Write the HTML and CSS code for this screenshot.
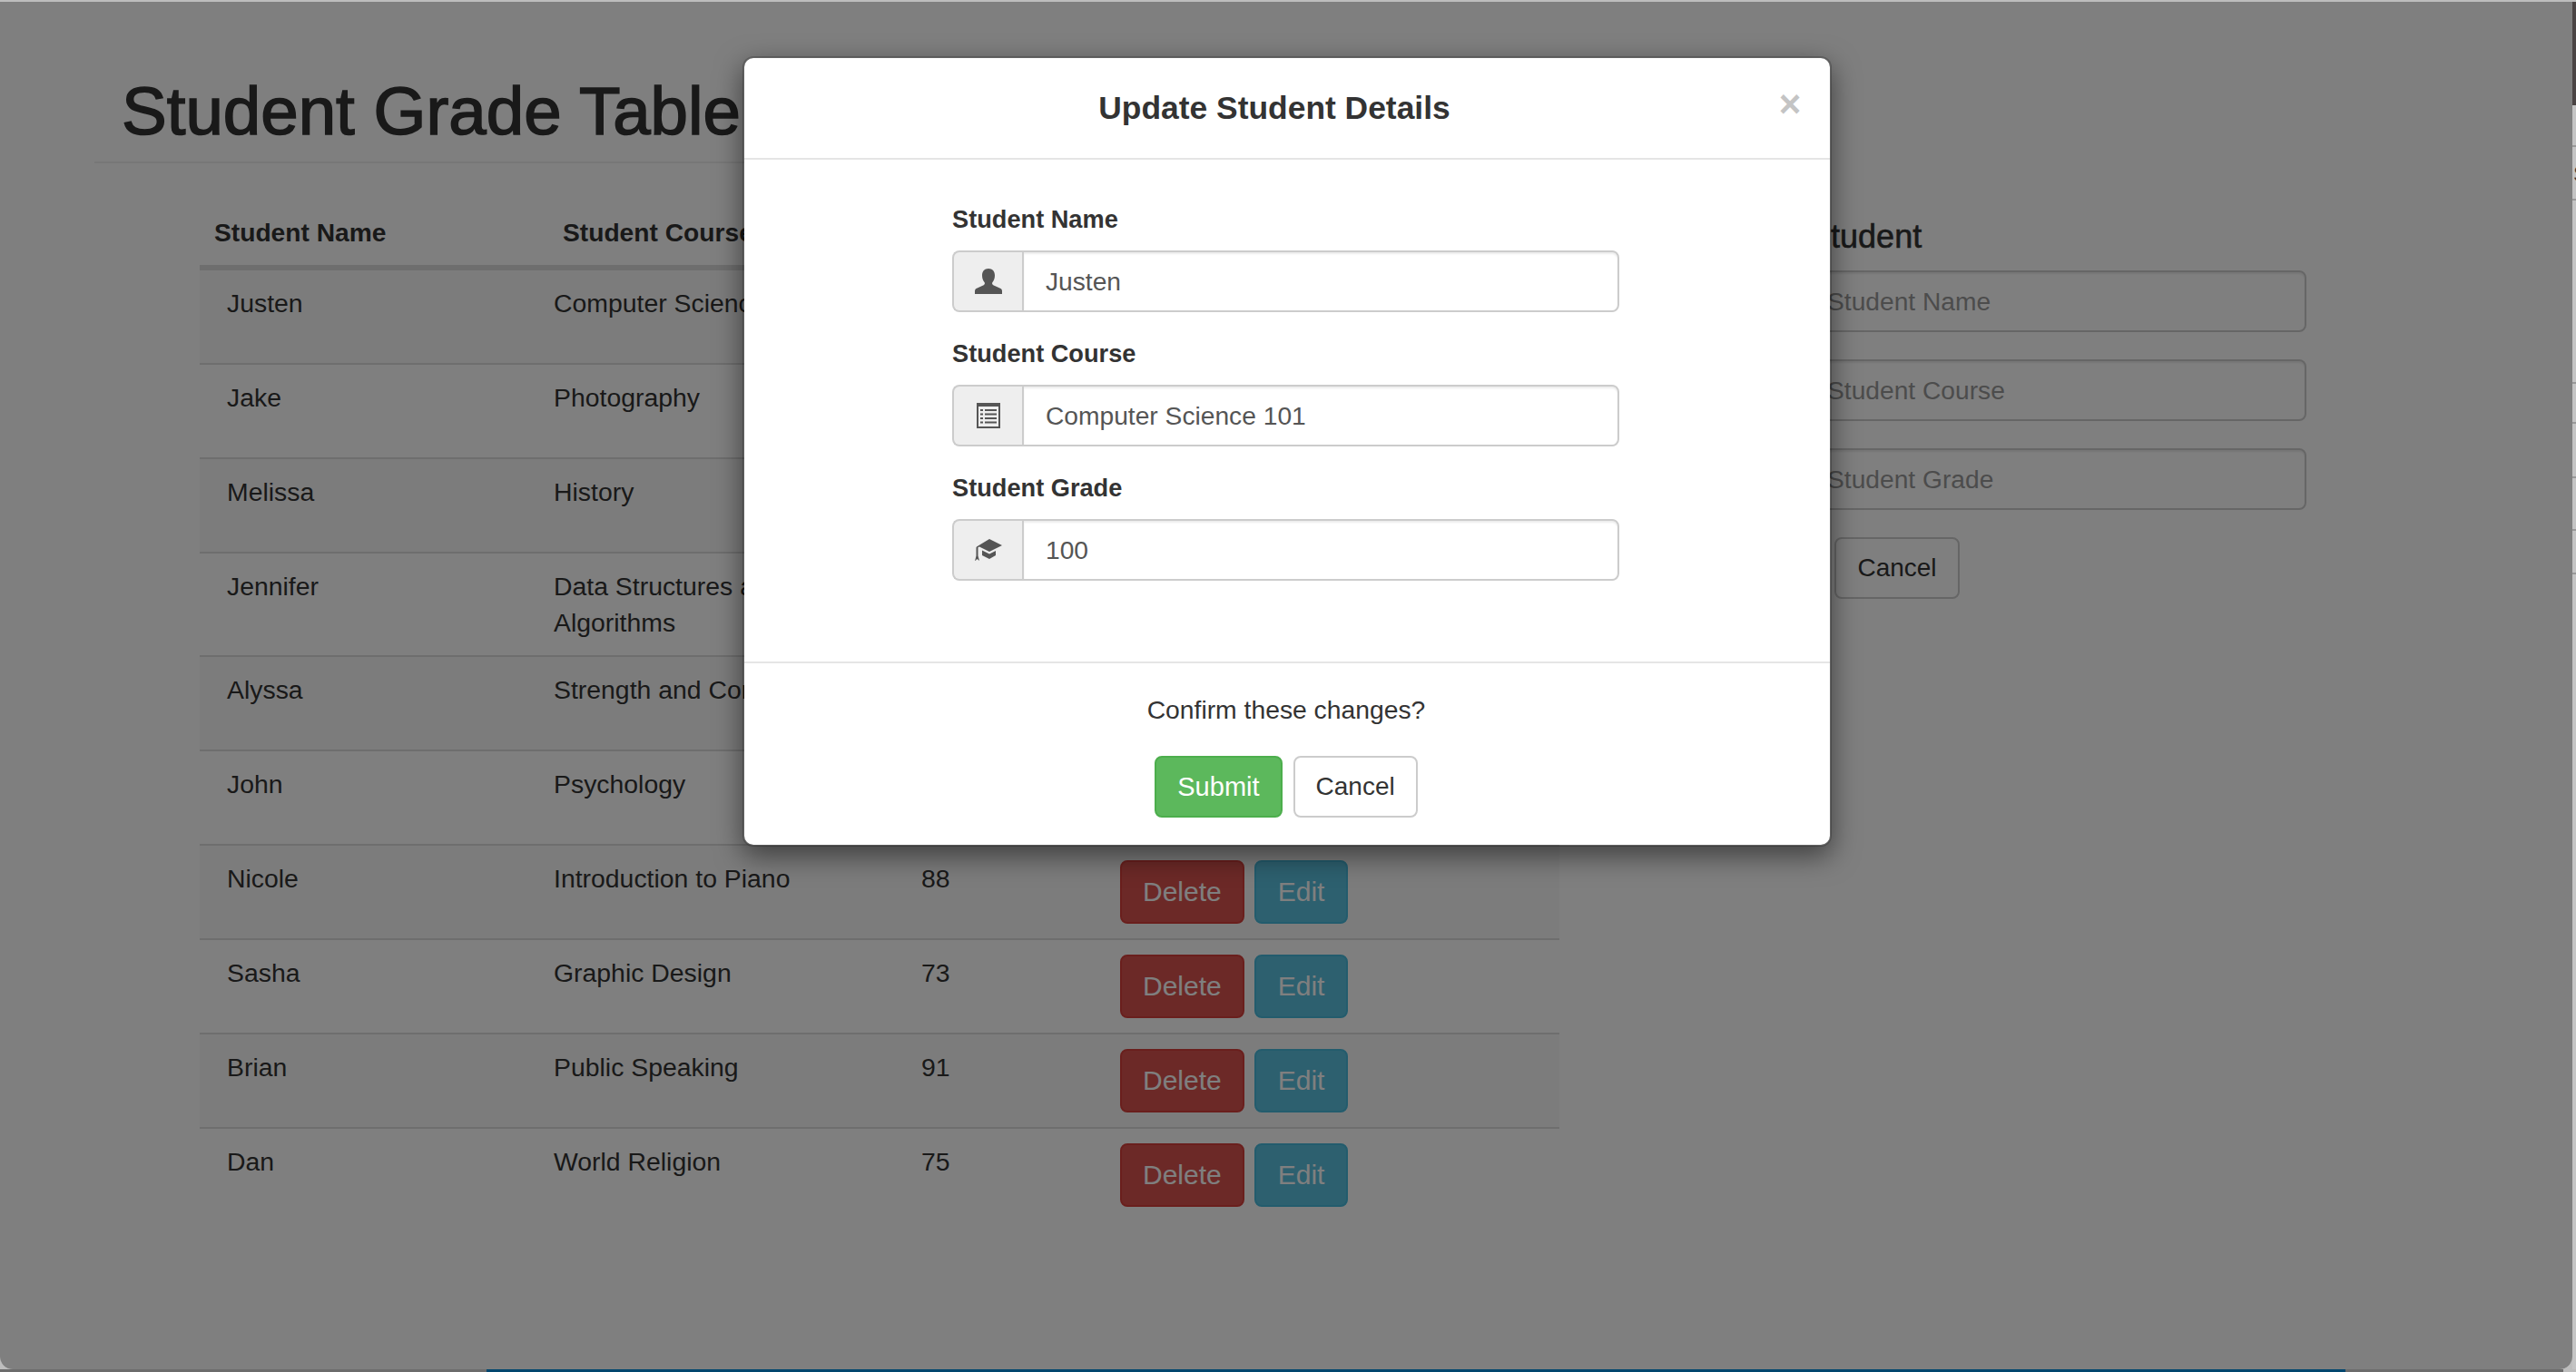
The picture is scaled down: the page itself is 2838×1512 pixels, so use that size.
FILE: index.html
```html
<!DOCTYPE html>
<html lang="en">
<head>
<meta charset="utf-8">
<title>Student Grade Table</title>
<link rel="stylesheet" href="styles.css">
</head>
<body>
<div class="topline"></div>
<div class="desktop">
  <div class="window">
    <div class="page">
      <header class="page-header"><h1>Student Grade Table</h1></header>
      <div class="content">
        <table class="grades">
          <colgroup><col class="c1"><col class="c2"><col class="c3"><col class="c4"></colgroup>
          <thead>
            <tr><th class="th-name">Student Name</th><th class="th-course">Student Course</th><th>Student Grade</th><th>Operations</th></tr>
          </thead>
          <tbody>
            <tr><td class="td-name">Justen</td><td>Computer Science 101</td><td>100</td><td><div class="ops"><button class="btn danger">Delete</button><button class="btn info">Edit</button></div></td></tr>
            <tr><td class="td-name">Jake</td><td>Photography</td><td>82</td><td><div class="ops"><button class="btn danger">Delete</button><button class="btn info">Edit</button></div></td></tr>
            <tr><td class="td-name">Melissa</td><td>History</td><td>95</td><td><div class="ops"><button class="btn danger">Delete</button><button class="btn info">Edit</button></div></td></tr>
            <tr><td class="td-name">Jennifer</td><td>Data Structures and Algorithms</td><td>89</td><td><div class="ops"><button class="btn danger">Delete</button><button class="btn info">Edit</button></div></td></tr>
            <tr><td class="td-name">Alyssa</td><td>Strength and Conditioning</td><td>78</td><td><div class="ops"><button class="btn danger">Delete</button><button class="btn info">Edit</button></div></td></tr>
            <tr><td class="td-name">John</td><td>Psychology</td><td>84</td><td><div class="ops"><button class="btn danger">Delete</button><button class="btn info">Edit</button></div></td></tr>
            <tr><td class="td-name">Nicole</td><td>Introduction to Piano</td><td>88</td><td><div class="ops"><button class="btn danger">Delete</button><button class="btn info">Edit</button></div></td></tr>
            <tr><td class="td-name">Sasha</td><td>Graphic Design</td><td>73</td><td><div class="ops"><button class="btn danger">Delete</button><button class="btn info">Edit</button></div></td></tr>
            <tr><td class="td-name">Brian</td><td>Public Speaking</td><td>91</td><td><div class="ops"><button class="btn danger">Delete</button><button class="btn info">Edit</button></div></td></tr>
            <tr><td class="td-name">Dan</td><td>World Religion</td><td>75</td><td><div class="ops"><button class="btn danger">Delete</button><button class="btn info">Edit</button></div></td></tr>
          </tbody>
        </table>
        <aside class="panel">
          <h4>Add Student</h4>
          <div class="panel-field"><span class="addon"></span><input class="input" type="text" placeholder="Student Name"></div>
          <div class="panel-field"><span class="addon"></span><input class="input" type="text" placeholder="Student Course"></div>
          <div class="panel-field"><span class="addon"></span><input class="input" type="text" placeholder="Student Grade"></div>
          <div class="panel-actions"><button class="btn success add">Add</button><button class="btn plain cancel-panel">Cancel</button></div>
        </aside>
      </div>
    </div>
    <div class="backdrop"></div>
    <div class="modal">
      <div class="modal-header">
        <button class="close">×</button>
        <h4>Update Student Details</h4>
      </div>
      <div class="modal-body">
        <label class="field-label">Student Name</label>
        <div class="field">
          <span class="addon">
            <svg class="icon" width="30" height="28" viewBox="0 0 30 28"><path d="M15 0c-4.500 0-7 3-7 7.500 0 3 1 5.500 2.500 7.500.8 1 .5 2.500-.8 3.300L1.500 22C.5 22.600 0 23.500 0 25v3h30v-3c0-1.500-.5-2.400-1.500-3l-8.200-3.700c-1.300-.8-1.600-2.300-.8-3.300C21 13 22 10.500 22 7.500 22 3 19.500 0 15 0z"/></svg>
          </span>
          <input class="input" type="text" value="Justen">
        </div>
        <label class="field-label">Student Course</label>
        <div class="field">
          <span class="addon">
            <svg class="icon" width="26" height="28" viewBox="0 0 26 28"><path fill-rule="evenodd" d="M0 0h26v28H0zM2 4v22h22V4z"/><path d="M4 7h3v2H4zM9 7h13v2H9zM4 11.500h3v2H4zM9 11.500h13v2H9zM4 16h3v2H4zM9 16h13v2H9zM4 20.500h3v2H4zM9 20.500h13v2H9z"/></svg>
          </span>
          <input class="input" type="text" value="Computer Science 101">
        </div>
        <label class="field-label">Student Grade</label>
        <div class="field">
          <span class="addon">
            <svg class="icon" width="30" height="24" viewBox="0 0 30 24"><path d="M16 0l14 7-14 7-11-5.500-1.500.8v9.200l1.500 5.500-2.500-2-2.500 2.500 1.500-6V9.500L2 8.500z"/><path d="M8 12.500l8 4 7-3.500v5l-7 4-8-4z"/></svg>
          </span>
          <input class="input" type="text" value="100">
        </div>
      </div>
      <div class="modal-footer">
        <p class="confirm">Confirm these changes?</p>
        <div class="modal-actions"><button class="btn success submit">Submit</button><button class="btn plain cancel">Cancel</button></div>
      </div>
    </div>
  </div>
  <div class="edge"><span class="edge-glyph">S</span></div>
</div>
<div class="bottomline"></div>
</body>
</html>
```

FILE: styles.css
```css
* { box-sizing: border-box; }
html, body { margin: 0; height: 100%; }
body {
  display: flex;
  flex-direction: column;
  overflow: hidden;
  background: #bdbdbd;
  font-family: "Liberation Sans", Arial, sans-serif;
  font-size: 28px;
  line-height: 40px;
  color: #333;
}
.topline { height: 2px; flex: none; background: #bdbdbd; }
.bottomline {
  height: 3px;
  flex: none;
  background: linear-gradient(90deg, #6c6c6c 0, #6c6c6c 536px, #00466e 536px, #00466e 2584px, #6c6c6c 2584px, #6c6c6c 2824px, #bdbdbd 2824px);
}
.desktop { flex: 1; display: flex; min-height: 0; }
.window {
  position: relative;
  flex: 1;
  overflow: hidden;
  background: #fff;
  border-radius: 0 0 14px 14px;
}
.edge {
  position: relative;
  width: 4px;
  flex: none;
  overflow: hidden;
  background:
    linear-gradient(#4a4444, #4a4444) 0 0 / 100% 114px no-repeat,
    linear-gradient(#999, #999) 0 158px / 100% 2px no-repeat,
    linear-gradient(#999, #999) 0 217px / 100% 2px no-repeat,
    linear-gradient(#999, #999) 0 419px / 100% 2px no-repeat,
    linear-gradient(#999, #999) 0 463px / 100% 2px no-repeat,
    linear-gradient(#999, #999) 0 523px / 100% 2px no-repeat,
    linear-gradient(#999, #999) 0 581px / 100% 2px no-repeat,
    linear-gradient(#999, #999) 0 629px / 100% 2px no-repeat,
    #c4c4c4;
}
.edge-glyph { position: absolute; left: 1px; top: 170px; font-size: 24px; color: #3a3a3a; }

.page-header { margin: 79px 0 0 104px; width: 1500px; padding: 0 0 18px 30px; border-bottom: 2px solid #eee; }
.page-header h1 { position: relative; top: 2px; margin: 0; font-size: 74.5px; line-height: 79px; font-weight: 400; color: #333; -webkit-text-stroke: 1.6px #333; }

.content { display: flex; margin: 40px 0 0 220px; align-items: flex-start; }
.grades { width: 1498px; flex: none; table-layout: fixed; border-collapse: separate; border-spacing: 0; }
.c1 { width: 374px; } .c2 { width: 405px; } .c3 { width: 219px; } .c4 { width: 500px; }
.grades th { padding: 16px; text-align: left; font-weight: 700; font-size: 28.2px; border-bottom: 4px solid #ddd; white-space: nowrap; }
.grades .th-course { padding-left: 26px; }
.grades td { padding: 16px; border-top: 2px solid #ddd; vertical-align: top; font-size: 28.4px; }
.grades .td-name { padding-left: 30px; }
.grades tbody tr:nth-child(odd) { background: #f9f9f9; }
.ops { display: flex; gap: 11px; height: 70px; }

.btn {
  height: 68px;
  padding: 0 24px;
  border: 2px solid transparent;
  border-radius: 8px;
  font: inherit;
  color: #333;
  background: #fff;
  white-space: nowrap;
}
.ops .btn { height: 70px; font-size: 30px; padding: 0 24px; }
.ops .danger { padding: 0 23px; }
.danger { background: #d9534f; border-color: #d43f3a; color: #fff; }
.info { background: #5bc0de; border-color: #46b8da; color: #fff; }
.success { background: #5cb85c; border-color: #4cae4c; color: #fff; }
.plain { background: #fff; border-color: #ccc; }
.submit { padding: 0 23px; font-size: 29px; }
.cancel { padding: 0 23px; }

.panel { width: 631px; margin-left: 192px; flex: none; }
.panel h4 { margin: 21px 0 17px 9px; font-size: 36px; line-height: 40px; font-weight: 400; color: #333; -webkit-text-stroke: .6px #333; }
.panel-field { display: flex; height: 68px; margin-bottom: 30px; }
.panel-actions { display: flex; gap: 10px; }
.add { width: 101px; padding: 0; }
.cancel-panel { width: 138px; padding: 0; }

.addon {
  display: flex;
  align-items: center;
  justify-content: center;
  width: 77px;
  flex: none;
  background: #eee;
  border: 2px solid #ccc;
  border-right: 0;
  border-radius: 8px 0 0 8px;
}
.input {
  flex: 1;
  min-width: 0;
  height: 100%;
  padding: 0 24px;
  border: 2px solid #ccc;
  border-radius: 0 8px 8px 0;
  font: inherit;
  font-size: 28.2px;
  color: #555;
  background: #fff;
  box-shadow: inset 0 2px 2px rgba(0,0,0,.075);
}
.input::placeholder { color: #999; opacity: 1; }
.icon { fill: #555; display: block; }

.backdrop { position: absolute; inset: 0; background: rgba(0,0,0,.5); }
.modal {
  position: absolute;
  left: 818px;
  top: 60px;
  width: 1200px;
  background: #fff;
  border: 2px solid rgba(0,0,0,.2);
  background-clip: padding-box;
  border-radius: 12px;
  box-shadow: 0 10px 30px rgba(0,0,0,.5);
}
.modal-header { height: 112px; padding: 0 30px; border-bottom: 2px solid #e5e5e5; display: flex; flex-direction: row-reverse; align-items: center; }
.modal-header h4 { flex: 1; margin: 0; text-align: center; font-size: 35.4px; line-height: 40px; font-weight: 700; color: #333; }
.close {
  flex: none;
  width: 28px;
  padding: 0;
  margin-top: -8px;
  border: 0;
  background: none;
  font: 700 42px/42px "Liberation Sans", Arial, sans-serif;
  color: #c4c4c4;
}
.modal-body { padding: 46px 232px 63px 229px; }
.field-label { display: block; margin-bottom: 14px; font-weight: 700; font-size: 27.2px; }
.field { display: flex; height: 68px; margin-bottom: 26px; }
.modal-footer { padding: 31px 32px 30px 30px; border-top: 2px solid #e5e5e5; text-align: center; }
.confirm { margin: 0 0 31px; font-size: 28.3px; }
.modal-actions { display: flex; justify-content: center; gap: 12px; }
```
